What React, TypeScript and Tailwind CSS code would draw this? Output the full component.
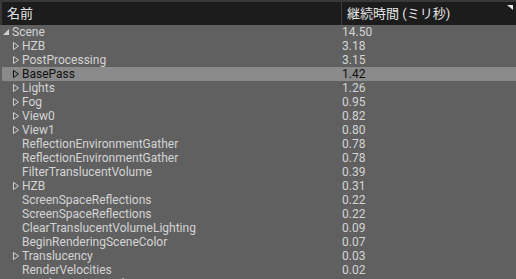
import React from "react";

type Row = { name: string; value: string; kind: "open" | "closed" | "leaf"; depth: number; selected?: boolean };

const rows: Row[] = [
  { name: "Scene", value: "14.50", kind: "open", depth: 0 },
  { name: "HZB", value: "3.18", kind: "closed", depth: 1 },
  { name: "PostProcessing", value: "3.15", kind: "closed", depth: 1 },
  { name: "BasePass", value: "1.42", kind: "closed", depth: 1, selected: true },
  { name: "Lights", value: "1.26", kind: "closed", depth: 1 },
  { name: "Fog", value: "0.95", kind: "closed", depth: 1 },
  { name: "View0", value: "0.82", kind: "closed", depth: 1 },
  { name: "View1", value: "0.80", kind: "closed", depth: 1 },
  { name: "ReflectionEnvironmentGather", value: "0.78", kind: "leaf", depth: 1 },
  { name: "ReflectionEnvironmentGather", value: "0.78", kind: "leaf", depth: 1 },
  { name: "FilterTranslucentVolume", value: "0.39", kind: "leaf", depth: 1 },
  { name: "HZB", value: "0.31", kind: "closed", depth: 1 },
  { name: "ScreenSpaceReflections", value: "0.22", kind: "leaf", depth: 1 },
  { name: "ScreenSpaceReflections", value: "0.22", kind: "leaf", depth: 1 },
  { name: "ClearTranslucentVolumeLighting", value: "0.09", kind: "leaf", depth: 1 },
  { name: "BeginRenderingSceneColor", value: "0.07", kind: "leaf", depth: 1 },
  { name: "Translucency", value: "0.03", kind: "closed", depth: 1 },
  { name: "RenderVelocities", value: "0.02", kind: "leaf", depth: 1 },
  { name: "ResolveSceneDepth", value: "0.01", kind: "leaf", depth: 1 },
];

function Arrow({ kind, selected }: { kind: Row["kind"]; selected?: boolean }) {
  if (kind === "open") {
    return (
      <svg width="8" height="8" viewBox="0 0 8 8" className="shrink-0">
        <polygon points="7,1 7,7 1,7" fill="#d0d0d0" />
      </svg>
    );
  }
  if (kind === "closed") {
    return (
      <svg width="8" height="10" viewBox="0 0 8 10" className="shrink-0">
        <polygon points="1.5,1.5 6.5,5 1.5,8.5" fill="none" stroke={selected ? "#111" : "#d0d0d0"} strokeWidth="1" />
      </svg>
    );
  }
  return <span className="w-[8px] shrink-0" />;
}

export default function App() {
  return (
    <div
      className="w-[516px] h-[279px] overflow-hidden bg-[#606060] flex flex-col"
      style={{ fontFamily: 'Roboto, "Noto Sans CJK JP", sans-serif' }}
    >
      <div className="h-[25px] shrink-0 bg-[#383838] pt-[2px] pl-[2px] flex">
        <div className="flex-1 flex bg-[#1c1c1c] relative">
          <div className="w-[340px] flex items-center pl-[5px] text-[13px] text-[#e4e4e4] border-r border-[#3c3c3c]">名前</div>
          <div className="flex-1 flex items-center pl-[5px] text-[13px] text-[#e4e4e4]">継続時間 (ミリ秒)</div>
          <svg width="6" height="5" viewBox="0 0 6 5" className="absolute right-[3px] top-[3px]">
            <polygon points="0,0 6,0 6,5" fill="#e8e8e8" />
          </svg>
        </div>
      </div>
      <div className="flex flex-col">
        {rows.map((r, i) => (
          <div
            key={i}
            className={`h-[14px] shrink-0 flex items-center text-[12px] leading-[14px] ml-[2px] ${
              r.selected ? "bg-[#8a8a8a] text-[#101010]" : "text-[#d4d4d4]"
            }`}
          >
            <div className={`w-[340px] flex items-center gap-[2px] ${r.depth === 0 ? "pl-[0px]" : "pl-[10px]"}`}>
              <Arrow kind={r.kind} selected={r.selected} />
              <span className="whitespace-nowrap">{r.name}</span>
            </div>
            <div className="flex-1">{r.value}</div>
          </div>
        ))}
      </div>
    </div>
  );
}
